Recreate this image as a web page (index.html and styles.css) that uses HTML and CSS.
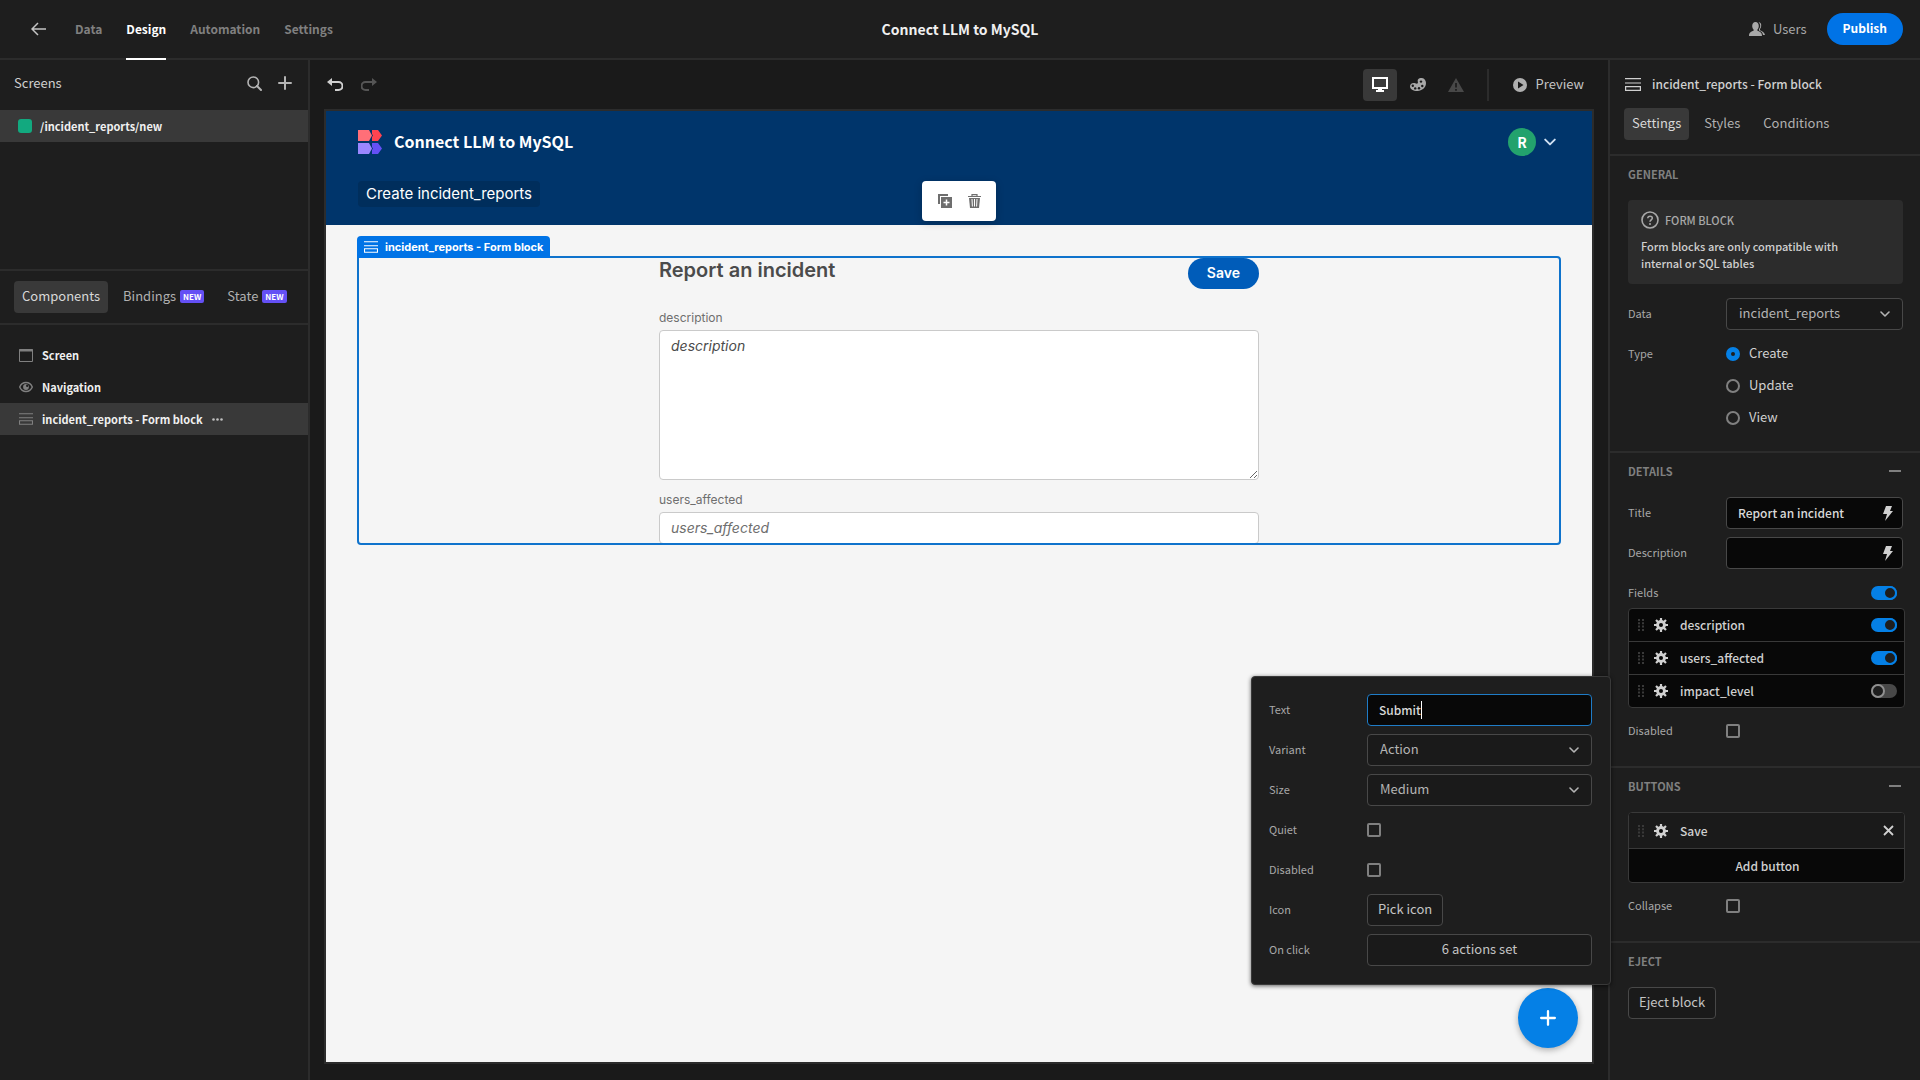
FILE: index.html
```html
<!DOCTYPE html>
<html lang="en">
<head>
<meta charset="UTF-8">
<meta name="viewport" content="width=device-width, initial-scale=1.0">
<title>Connect LLM to MySQL</title>
<link rel="stylesheet" href="styles.css">
</head>
<body>
<!-- shared icons -->
<svg class="sprite" width="0" height="0">
  <symbol id="i-form" viewBox="0 0 16 13"><path d="M0 .6h16M0 5h16M.6 8.600h14.800v3.800H.6z" fill="none" stroke="currentColor" stroke-width="1.200"/></symbol>
  <symbol id="i-chevron" viewBox="0 0 10 6"><path d="M1 1l4 4 4-4" fill="none" stroke="currentColor" stroke-width="1.6" stroke-linecap="round" stroke-linejoin="round"/></symbol>
  <symbol id="i-bolt" viewBox="0 0 10 15"><path d="M3 0h6L7 5h3L2 15l2-7H0z" fill="currentColor"/></symbol>
  <symbol id="i-gear" viewBox="0 0 14 14"><path d="M7 0v14M0 7h14M2 2l10 10M12 2L2 12" stroke="currentColor" stroke-width="2.2"/><circle cx="7" cy="7" r="3.4" fill="none" stroke="currentColor" stroke-width="3"/><circle cx="7" cy="7" r="2" fill="#080808"/></symbol>
  <symbol id="i-grip" viewBox="0 0 6 12"><path d="M1 0v12M5 0v12" stroke="currentColor" stroke-width="2" stroke-dasharray="2 1.3"/></symbol>
  <symbol id="i-plus" viewBox="0 0 14 14"><path d="M7 1v12M1 7h12" stroke="currentColor" stroke-width="2" stroke-linecap="round"/></symbol>
</svg>

<header class="topbar">
  <nav class="topbar-nav">
    <a href="#" class="back" aria-label="Back"><svg width="16" height="14" viewBox="0 0 16 14"><path d="M15 7H1M7 1L1 7l6 6" fill="none" stroke="currentColor" stroke-width="1.5"/></svg></a>
    <a href="#">Data</a>
    <a href="#" class="active">Design</a>
    <a href="#">Automation</a>
    <a href="#">Settings</a>
  </nav>
  <h1 class="topbar-title">Connect LLM to MySQL</h1>
  <div class="topbar-actions">
    <a href="#" class="users"><svg width="16" height="14" viewBox="0 0 16 14"><path d="M6.500 0C4.300 0 3.200 1.800 3.200 4c0 1.500.6 2.800 1.400 3.600v1.200C2 9.700 0 10.500 0 14h13c0-3.500-2-4.300-4.600-5.200V7.600C9.200 6.800 9.800 5.500 9.800 4c0-2.200-1.100-4-3.300-4z" fill="currentColor"/><path d="M9.500.2c2 0 3 1.700 2.700 3.900-.1 1.300-.5 2.200-1.200 2.900v1.200c2 .8 4.600 2 5 4.800h-2c-.4-2.400-1.900-3.600-4-4.400V7c.9-.9 1.200-2 1.200-3.300 0-1.500-.6-2.800-1.700-3.500z" fill="currentColor"/></svg>Users</a>
    <button type="button" class="publish">Publish</button>
  </div>
</header>

<div class="app">
  <aside class="left-panel">
    <section class="screens">
      <div class="panel-head">
        <h2>Screens</h2>
        <button type="button" class="icon-btn" aria-label="Search"><svg width="15" height="15" viewBox="0 0 15 15"><circle cx="6.300" cy="6.300" r="5.300" fill="none" stroke="currentColor" stroke-width="1.600"/><path d="M10 10l4 4" stroke="currentColor" stroke-width="2" stroke-linecap="round"/></svg></button>
        <button type="button" class="icon-btn" aria-label="Add screen"><svg width="14" height="14"><use href="#i-plus"/></svg></button>
      </div>
      <a href="#" class="tree-row selected"><span class="role"></span>/incident_reports/new</a>
    </section>
    <div class="tabs left-tabs">
      <button type="button" class="tab active">Components</button>
      <button type="button" class="tab">Bindings <span class="badge">NEW</span></button>
      <button type="button" class="tab">State <span class="badge">NEW</span></button>
    </div>
    <div class="tree">
      <a href="#" class="tree-row"><svg width="14" height="13" viewBox="0 0 14 13"><path d="M.5.500h13v12H.5z" fill="none" stroke="currentColor"/><path d="M0 1.500h14" stroke="currentColor" stroke-width="2"/></svg>Screen</a>
      <a href="#" class="tree-row"><svg width="14" height="14" viewBox="0 0 14 14"><path d="M.7 7C2 3.800 4.300 2.500 7 2.500S12 3.800 13.300 7C12 10.200 9.700 11.500 7 11.500S2 10.200.7 7z" fill="none" stroke="currentColor" stroke-width="1.400"/><circle cx="7" cy="7" r="2.900" fill="currentColor"/><circle cx="8.200" cy="5.800" r="1.200" fill="#1e1e1e"/></svg>Navigation</a>
      <a href="#" class="tree-row selected"><svg width="14" height="12"><use href="#i-form"/></svg>incident_reports - Form block
        <svg class="more" width="11" height="3" viewBox="0 0 11 3"><circle cx="1.500" cy="1.500" r="1.300" fill="currentColor"/><circle cx="5.500" cy="1.500" r="1.300" fill="currentColor"/><circle cx="9.500" cy="1.500" r="1.300" fill="currentColor"/></svg></a>
    </div>
  </aside>

  <main class="builder">
    <div class="toolbar">
      <button type="button" class="icon-btn" aria-label="Undo"><svg width="16" height="13" viewBox="0 0 16 13"><path d="M4 4h7.500a3.700 3.700 0 0 1 0 8H8" fill="none" stroke="currentColor" stroke-width="2"/><path d="M0 4l5-4v8z" fill="currentColor"/></svg></button>
      <button type="button" class="icon-btn off" aria-label="Redo"><svg width="16" height="13" viewBox="0 0 16 13"><path d="M12 4H4.500a3.700 3.700 0 0 0 0 8H8" fill="none" stroke="currentColor" stroke-width="2"/><path d="M16 4l-5-4v8z" fill="currentColor"/></svg></button>
      <div class="toolbar-right">
        <button type="button" class="tool active" aria-label="Desktop"><svg width="16" height="15" viewBox="0 0 16 15"><path d="M1 1h14v10H1z" fill="none" stroke="currentColor" stroke-width="2"/><path d="M6 11h4v2h2v2H4v-2h2z" fill="currentColor"/></svg></button>
        <button type="button" class="tool" aria-label="Theme"><svg width="16" height="13" viewBox="0 0 16 13"><path d="M8 1.500C9 .4 10.500-.1 12 .1c2.400.4 4 2.500 4 5C16 9.700 12 13 7.500 13 3 13 0 11 0 8.200 0 6.300 1.500 5 3.500 5c1.700 0 2.500 1 3.800.6C8.800 5 7 3 8 1.500z" fill="currentColor"/><g fill="#1a1a1a"><circle cx="2.800" cy="7.800" r="1.200"/><circle cx="5.200" cy="10.400" r="1.200"/><circle cx="9" cy="10.300" r="1.200"/><circle cx="12.300" cy="8" r="1.200"/><circle cx="11" cy="3.600" r="1.200"/></g></svg></button>
        <button type="button" class="tool off" aria-label="Errors"><svg width="16" height="14" viewBox="0 0 16 14"><path d="M8 0l8 14H0z" fill="currentColor"/><path d="M8 5v4.500M8 11v1.700" stroke="#1a1a1a" stroke-width="1.600"/></svg></button>
        <button type="button" class="preview"><svg width="14" height="14" viewBox="0 0 14 14"><circle cx="7" cy="7" r="7" fill="currentColor"/><path d="M5 3.500L10.500 7 5 10.500z" fill="#1a1a1a"/></svg><span>Preview</span></button>
      </div>
    </div>

    <div class="canvas">
      <header class="site-header">
        <div class="site-brand">
          <svg width="24" height="24" viewBox="0 0 24 24"><path d="M0 0h11l3 5.500-3 5.500H0z" fill="#ff6f78"/><path d="M14 0h6l4 5.500-4 5.500h-6v-4l1-1.500-1-1.500z" fill="#ff4450"/><path d="M0 13h11l3 5.500-3 5.500H0z" fill="#9a87ff"/><path d="M14 13h6l4 5.500-4 5.500h-6v-4l1-1.500-1-1.500z" fill="#6450f5"/></svg>
          <h2>Connect LLM to MySQL</h2>
          <button type="button" class="user-menu" aria-label="Account"><span class="avatar">R</span><svg width="12" height="8"><use href="#i-chevron"/></svg></button>
        </div>
        <a href="#" class="site-link">Create incident_reports</a>
      </header>

      <div class="site-body">
        <div class="block">
          <span class="block-label"><svg width="14" height="12"><use href="#i-form"/></svg>incident_reports - Form block</span>
          <div class="block-tools">
            <button type="button" class="icon-btn" aria-label="Duplicate"><svg width="14" height="14" viewBox="0 0 14 14"><path d="M0 0h10v2H2v8H0z" fill="currentColor"/><path d="M3 3h11v11H3z" fill="currentColor"/><path d="M8.500 5.500v6M5.500 8.500h6" stroke="#fff" stroke-width="1.500"/></svg></button>
            <button type="button" class="icon-btn" aria-label="Delete"><svg width="13" height="14" viewBox="0 0 13 14"><path d="M4 2V.6h5V2M0 2.500h13" fill="none" stroke="currentColor" stroke-width="1.200"/><path d="M1 4h11l-1 10H2z" fill="currentColor"/><path d="M4 5l.4 7.500M6.500 5v7.500M9 5l-.4 7.500" stroke="#fff"/></svg></button>
          </div>
          <form class="report">
            <div class="report-head">
              <h3>Report an incident</h3>
              <button type="button" class="save">Save</button>
            </div>
            <label for="description">description</label>
            <textarea id="description" placeholder="description"></textarea>
            <label for="usersAffected">users_affected</label>
            <input type="text" id="usersAffected" placeholder="users_affected">
          </form>
        </div>
      </div>
      <button type="button" class="fab" aria-label="Add component"><svg width="16" height="16"><use href="#i-plus"/></svg></button>
    </div>
  </main>

  <aside class="right-panel">
    <div class="right-head">
      <h2><svg width="16" height="13"><use href="#i-form"/></svg>incident_reports - Form block</h2>
      <div class="tabs">
        <button type="button" class="tab active">Settings</button>
        <button type="button" class="tab">Styles</button>
        <button type="button" class="tab">Conditions</button>
      </div>
    </div>

    <section class="group">
      <h3>GENERAL</h3>
      <div class="info">
        <h4><svg width="18" height="18" viewBox="0 0 18 18"><circle cx="9" cy="9" r="8" fill="none" stroke="currentColor" stroke-width="1.600"/><path d="M6.800 7.200C6.800 4.500 11.400 4.600 11.300 7.200 11.200 8.800 9 9 9 10.800" fill="none" stroke="currentColor" stroke-width="1.600"/><circle cx="9" cy="13" r="1" fill="currentColor"/></svg>FORM BLOCK</h4>
        <p>Form blocks are only compatible with internal or SQL tables</p>
      </div>
      <div class="row">
        <label for="data">Data</label>
        <div class="field"><select id="data"><option>incident_reports</option></select><svg class="chevron" width="10" height="6"><use href="#i-chevron"/></svg></div>
      </div>
      <div class="row row-top">
        <span class="row-label">Type</span>
        <div class="radios">
          <label><input type="radio" name="type" checked>Create</label>
          <label><input type="radio" name="type">Update</label>
          <label><input type="radio" name="type">View</label>
        </div>
      </div>
    </section>

    <section class="group">
      <h3>DETAILS <span class="collapse"></span></h3>
      <div class="row">
        <label for="title">Title</label>
        <div class="field"><input type="text" id="title" value="Report an incident"><svg class="bolt" width="10" height="15"><use href="#i-bolt"/></svg></div>
      </div>
      <div class="row">
        <label for="desc">Description</label>
        <div class="field"><input type="text" id="desc"><svg class="bolt" width="10" height="15"><use href="#i-bolt"/></svg></div>
      </div>
      <div class="row fields-row">
        <label for="allFields">Fields</label>
        <input type="checkbox" class="switch" id="allFields" checked>
      </div>
      <ul class="list">
        <li><svg class="grip" width="6" height="12"><use href="#i-grip"/></svg><svg width="14" height="14"><use href="#i-gear"/></svg><label for="f1">description</label><input type="checkbox" class="switch" id="f1" checked></li>
        <li><svg class="grip" width="6" height="12"><use href="#i-grip"/></svg><svg width="14" height="14"><use href="#i-gear"/></svg><label for="f2">users_affected</label><input type="checkbox" class="switch" id="f2" checked></li>
        <li><svg class="grip" width="6" height="12"><use href="#i-grip"/></svg><svg width="14" height="14"><use href="#i-gear"/></svg><label for="f3">impact_level</label><input type="checkbox" class="switch" id="f3"></li>
      </ul>
      <div class="row">
        <label for="disabled">Disabled</label>
        <input type="checkbox" class="check" id="disabled">
      </div>
    </section>

    <section class="group">
      <h3>BUTTONS <span class="collapse"></span></h3>
      <ul class="list buttons-list">
        <li class="open"><svg class="grip" width="6" height="12"><use href="#i-grip"/></svg><svg width="14" height="14"><use href="#i-gear"/></svg><span class="name">Save</span><button type="button" class="icon-btn" aria-label="Remove"><svg width="11" height="11" viewBox="0 0 11 11"><path d="M1 1l9 9M10 1l-9 9" stroke="currentColor" stroke-width="1.800"/></svg></button></li>
        <li><button type="button" class="add">Add button</button></li>
      </ul>
      <div class="row">
        <label for="collapse">Collapse</label>
        <input type="checkbox" class="check" id="collapse">
      </div>
    </section>

    <section class="group">
      <h3>EJECT</h3>
      <button type="button" class="btn">Eject block</button>
    </section>
  </aside>
</div>

<!-- button settings popover -->
<div class="popover">
  <div class="row">
    <label for="btnText">Text</label>
    <div class="field focused"><input type="text" id="btnText" value="Submit"><span class="caret"></span></div>
  </div>
  <div class="row">
    <label for="variant">Variant</label>
    <div class="field"><select id="variant"><option>Action</option></select><svg class="chevron" width="10" height="6"><use href="#i-chevron"/></svg></div>
  </div>
  <div class="row">
    <label for="size">Size</label>
    <div class="field"><select id="size"><option>Medium</option></select><svg class="chevron" width="10" height="6"><use href="#i-chevron"/></svg></div>
  </div>
  <div class="row">
    <label for="quiet">Quiet</label>
    <input type="checkbox" class="check" id="quiet">
  </div>
  <div class="row">
    <label for="btnDisabled">Disabled</label>
    <input type="checkbox" class="check" id="btnDisabled">
  </div>
  <div class="row">
    <span class="row-label">Icon</span>
    <button type="button" class="btn">Pick icon</button>
  </div>
  <div class="row">
    <span class="row-label">On click</span>
    <button type="button" class="btn wide">6 actions set</button>
  </div>
</div>
</body>
</html>
```
FILE: styles.css
```css
*, *::before {
  box-sizing: border-box;
}
body {
  margin: 0;
  height: 100vh;
  display: flex;
  flex-direction: column;
  overflow: hidden;
  position: relative;
  background: #1a1a1a;
  color: #d0d0d0;
  font: 13px/20px "Noto Sans CJK SC", "Noto Sans", sans-serif;
}
h1, h2, h3, h4, p, ul {
  margin: 0;
  padding: 0;
  font-size: inherit;
}
a {
  color: inherit;
  text-decoration: none;
}
button, input, select, textarea {
  font: inherit;
  color: inherit;
  margin: 0;
}
button {
  background: none;
  border: none;
  padding: 0;
  cursor: pointer;
}
svg {
  display: block;
  flex: none;
}
.sprite {
  position: absolute;
}

/* top bar */
.topbar {
  height: 60px;
  flex: none;
  display: grid;
  grid-template-columns: 1fr auto 1fr;
  align-items: center;
  border-bottom: 2px solid #2c2c2c;
  background: #1e1e1e;
}
.topbar-nav {
  display: flex;
  gap: 24px;
  padding-left: 31px;
  color: #808080;
  font-size: 12px;
  font-weight: 700;
}
.topbar-nav a {
  height: 60px;
  line-height: 57px;
  margin-bottom: -2px;
  border-bottom: 2px solid transparent;
}
.topbar-nav .back {
  display: flex;
  align-items: center;
  margin-right: 4px;
  color: #c4c4c4;
}
.topbar-nav .active {
  color: #fff;
  border-color: #fff;
}
.topbar-title {
  font-size: 14px;
  font-weight: 700;
  color: #f0f0f0;
}
.topbar-actions {
  display: flex;
  justify-content: flex-end;
  align-items: center;
  gap: 20px;
  padding-right: 17px;
}
.users {
  display: flex;
  align-items: center;
  gap: 8px;
  color: #a8a8a8;
}
.publish {
  height: 32px;
  padding: 0 16px 3px;
  border-radius: 16px;
  background: #0073e6;
  color: #fff;
  font-size: 12px;
  font-weight: 700;
}

.app {
  flex: 1;
  min-height: 0;
  display: flex;
}

/* left panel */
.left-panel {
  width: 310px;
  flex: none;
  border-right: 2px solid #2c2c2c;
  background: #1e1e1e;
}
.screens {
  height: 211px;
  border-bottom: 2px solid #2c2c2c;
}
.panel-head {
  height: 50px;
  display: flex;
  align-items: center;
  gap: 16px;
  padding: 0 16px 4px 14px;
  color: #b4b4b4;
}
.panel-head h2 {
  flex: 1;
  font-weight: 400;
  color: #d0d0d0;
}
.tree-row {
  height: 32px;
  display: flex;
  align-items: center;
  gap: 9px;
  padding-left: 19px;
  font-size: 11px;
  font-weight: 700;
  color: #f0f0f0;
}
.tree-row svg {
  color: #808080;
}
.tree-row .more {
  color: #c0c0c0;
}
.selected {
  background: #393939;
}
.role {
  width: 14px;
  height: 14px;
  border-radius: 3px;
  background: #12a97f;
}
.screens .tree-row {
  padding-left: 18px;
  gap: 8px;
}
.tabs {
  display: flex;
}
.tab {
  height: 32px;
  display: flex;
  align-items: center;
  gap: 4px;
  padding: 0 8px 2px;
  border-radius: 4px;
  color: #b0b0b0;
}
.tab.active {
  background: #393939;
  color: #d8d8d8;
}
.left-tabs {
  height: 54px;
  padding: 10px 14px;
  gap: 7px;
  border-bottom: 2px solid #2c2c2c;
}
.badge {
  padding: 0 3px;
  border-radius: 2px;
  background: #6450f5;
  color: #fff;
  font-size: 8px;
  line-height: 13px;
  font-weight: 700;
}
.tree {
  padding-top: 14px;
}

/* builder */
.builder {
  flex: 1;
  min-width: 0;
  display: flex;
  flex-direction: column;
  padding: 0 14px 16px;
}
.toolbar {
  height: 49px;
  flex: none;
  display: flex;
  align-items: center;
  gap: 18px;
  padding: 0 10px 0 3px;
}
.off {
  color: #555;
}
.toolbar-right {
  flex: 1;
  display: flex;
  justify-content: flex-end;
  gap: 4px;
  color: #a8a8a8;
}
.tool {
  width: 34px;
  height: 32px;
  display: flex;
  align-items: center;
  justify-content: center;
  border-radius: 4px;
}
.tool.active {
  background: #393939;
  color: #fff;
}
.tool.off {
  color: #484848;
}
.preview {
  display: flex;
  align-items: center;
  gap: 9px;
  margin-left: 10px;
  padding-left: 24px;
  border-left: 2px solid #2c2c2c;
  color: #c4c4c4;
}
.preview svg {
  color: #b0b0b0;
}
.preview span {
  padding-bottom: 2px;
}
.canvas {
  flex: 1;
  position: relative;
  border: 2px solid #2c2c2c;
  background: #f5f5f5;
  font-family: Inter, sans-serif;
}
.site-header {
  padding: 16px 32px 18px;
  background: #00356b;
  color: #fff;
}
.site-brand {
  display: flex;
  align-items: center;
  gap: 12px;
  height: 30px;
}
.site-brand h2 {
  flex: 1;
  padding-bottom: 2px;
  font: 700 16px/26px "Noto Sans CJK SC", sans-serif;
}
.user-menu {
  display: flex;
  align-items: center;
  gap: 8px;
  padding-right: 4px;
  color: #cfe0f2;
}
.avatar {
  width: 28px;
  height: 28px;
  border-radius: 50%;
  background: #23a26d;
  color: #fff;
  font: 700 14px/28px "Noto Sans CJK SC", sans-serif;
}
.site-link {
  display: inline-block;
  margin-top: 24px;
  padding: 0 8px;
  border-radius: 4px;
  background: #002e5c;
  font-size: 15px;
  line-height: 26px;
}
.site-body {
  padding: 31px 31px 0;
}
.block {
  height: 289px;
  position: relative;
  border: 2px solid #0f73cc;
  border-radius: 0 4px 4px 4px;
}
.block-label {
  position: absolute;
  left: -2px;
  bottom: 100%;
  height: 22px;
  display: flex;
  align-items: center;
  gap: 7px;
  padding: 0 7px;
  border-radius: 4px 4px 0 0;
  background: #0073e6;
  color: #fff;
  font-size: 11px;
  font-weight: 700;
  white-space: nowrap;
}
.block-tools {
  position: absolute;
  left: 50%;
  bottom: 100%;
  margin: 0 0 37px -37px;
  width: 74px;
  height: 40px;
  display: flex;
  align-items: center;
  justify-content: center;
  gap: 16px;
  border-radius: 4px;
  background: #fff;
  color: #6e6e6e;
  box-shadow: 0 2px 8px rgba(0, 0, 0, 0.2);
}
.report {
  width: 600px;
  max-width: 100%;
  height: 285px;
  margin: 0 auto;
  display: flex;
  flex-direction: column;
  overflow: hidden;
}
.report-head {
  height: 50px;
  flex: none;
  display: flex;
  align-items: flex-start;
  justify-content: space-between;
}
.report-head h3 {
  color: #4b4b4b;
  font-size: 20px;
  line-height: 24px;
  font-weight: 600;
}
.save {
  height: 31px;
  padding: 0 19px 2px;
  border-radius: 16px;
  background: #005cb9;
  color: #fff;
  font-size: 14px;
  font-weight: 600;
}
.report label {
  padding-bottom: 2px;
  font-size: 12px;
  color: #6e6e6e;
}
.report textarea, .report input {
  flex: none;
  padding: 3px 11px;
  border: 1px solid #cacaca;
  border-radius: 4px;
  background: #fff;
  font-size: 14px;
  line-height: 24px;
}
.report textarea {
  height: 150px;
  margin-bottom: 10px;
}
.report input {
  height: 32px;
  padding: 2px 11px 4px;
}
.report ::placeholder {
  color: #6e6e6e;
  font-style: italic;
}
.report textarea::placeholder {
  color: #4b4b4b;
}
.fab {
  position: absolute;
  right: 14px;
  bottom: 14px;
  width: 60px;
  height: 60px;
  display: flex;
  align-items: center;
  justify-content: center;
  border-radius: 50%;
  background: #0580e6;
  color: #fff;
  box-shadow: 0 2px 6px rgba(0, 0, 0, 0.3);
}

/* right panel */
.right-panel {
  width: 312px;
  flex: none;
  border-left: 2px solid #2c2c2c;
  background: #1e1e1e;
}
.right-head {
  height: 96px;
  padding: 14px 14px 0;
  border-bottom: 2px solid #2c2c2c;
}
.right-head h2 {
  display: flex;
  align-items: center;
  gap: 11px;
  padding-left: 1px;
  margin-bottom: 14px;
  font-size: 12px;
  font-weight: 500;
}
.right-head .tabs {
  gap: 7px;
}
.group {
  padding: 6px 17px 19px 18px;
  border-bottom: 2px solid #2c2c2c;
}
.group:last-child {
  border: none;
}
.group h3 {
  display: flex;
  align-items: center;
  justify-content: space-between;
  height: 24px;
  margin-bottom: 14px;
  font-size: 11px;
  font-weight: 700;
  color: #808080;
}
.collapse {
  width: 12px;
  height: 2px;
  margin-right: 2px;
  background: #808080;
}
.info {
  padding: 10px 13px;
  margin-bottom: 14px;
  height: 84px;
  border-radius: 4px;
  background: #2c2c2c;
}
.info h4 {
  display: flex;
  align-items: center;
  gap: 6px;
  margin-bottom: 8px;
  font-size: 11px;
  font-weight: 500;
  color: #a8a8a8;
}
.info p {
  max-width: 210px;
  font-size: 11px;
  line-height: 17px;
  font-weight: 500;
  color: #d0d0d0;
}
.row {
  display: grid;
  grid-template-columns: 98px 1fr;
  align-items: center;
  height: 32px;
  margin-bottom: 8px;
}
.row:last-child {
  margin-bottom: 0;
}
.row > label, .row-label {
  padding-bottom: 2px;
  font-size: 11px;
  color: #a8a8a8;
}
.row-top {
  height: 94px;
  align-items: start;
}
.row-top .row-label {
  line-height: 30px;
}
.field {
  position: relative;
}
.field select, .field input {
  display: block;
  width: 100%;
  height: 32px;
  padding: 0 11px 2px;
  border: 1px solid #484848;
  border-radius: 4px;
  outline: none;
}
.field select {
  appearance: none;
  background: #1a1a1a;
  padding: 0 12px 2px;
  color: #b4b4b4;
}
.field input {
  background: #080808;
  color: #d8d8d8;
  font-size: 12px;
  font-weight: 500;
}
.focused input, .field input:focus {
  border-color: #1f7cc7;
}
.caret {
  position: absolute;
  left: 54px;
  top: 7px;
  width: 1px;
  height: 18px;
  background: #fff;
}
.chevron, .bolt {
  position: absolute;
  right: 13px;
  top: 13px;
  color: #b4b4b4;
}
.bolt {
  right: 10px;
  top: 9px;
  color: #d0d0d0;
}
.radios label {
  display: flex;
  align-items: center;
  gap: 9px;
  height: 32px;
  padding-bottom: 2px;
}
.radios input {
  appearance: none;
  width: 14px;
  height: 14px;
  margin-top: 2px;
  border: 2px solid #808080;
  border-radius: 50%;
}
.radios input:checked {
  border: 5px solid #0580e6;
}
.fields-row {
  grid-template-columns: 1fr auto;
  height: 24px;
  padding-right: 6px;
  margin-top: 12px;
  margin-bottom: 3px;
}
.switch {
  appearance: none;
  width: 26px;
  height: 14px;
  border-radius: 7px;
  background: #484848;
  display: flex;
}
.switch::before {
  content: "";
  width: 14px;
  height: 14px;
  border: 2px solid #909090;
  border-radius: 50%;
  background: #1e1e1e;
}
.switch:checked {
  background: #0580e6;
  justify-content: flex-end;
}
.switch:checked::before {
  border-color: #0580e6;
}
.list {
  list-style: none;
  margin: 0 -2px 7px 0;
  border: 1px solid #393939;
  border-radius: 4px;
  background: #080808;
  font-size: 12px;
  overflow: hidden;
}
.list li {
  height: 32px;
  display: flex;
  align-items: center;
  padding: 0 7px 0 9px;
  font-weight: 500;
}
.list li + li {
  height: 33px;
  border-top: 1px solid #393939;
}
.list .grip {
  margin-right: 10px;
  color: #393939;
}
.list label, .list .name {
  flex: 1;
  padding-left: 12px;
}
.list .open {
  height: 35px;
  background: #1a1a1a;
}
.list .open + li {
  height: 34px;
}
.list .open .icon-btn {
  margin-right: 3px;
}
.add {
  flex: 1;
  font-weight: 500;
}
.check {
  appearance: none;
  width: 14px;
  height: 14px;
  border: 2px solid #808080;
  border-radius: 2px;
}
.btn {
  justify-self: start;
  height: 32px;
  padding: 0 10px 2px;
  border: 1px solid #484848;
  border-radius: 4px;
  background: #1a1a1a;
  color: #c4c4c4;
}
.wide {
  justify-self: stretch;
}

.popover {
  position: absolute;
  right: 309px;
  top: 676px;
  width: 360px;
  padding: 17px 18px 18px 17px;
  border: 1px solid #393939;
  border-radius: 4px;
  background: #1e1e1e;
  box-shadow: 0 1px 4px rgba(0, 0, 0, 0.6);
}
```
